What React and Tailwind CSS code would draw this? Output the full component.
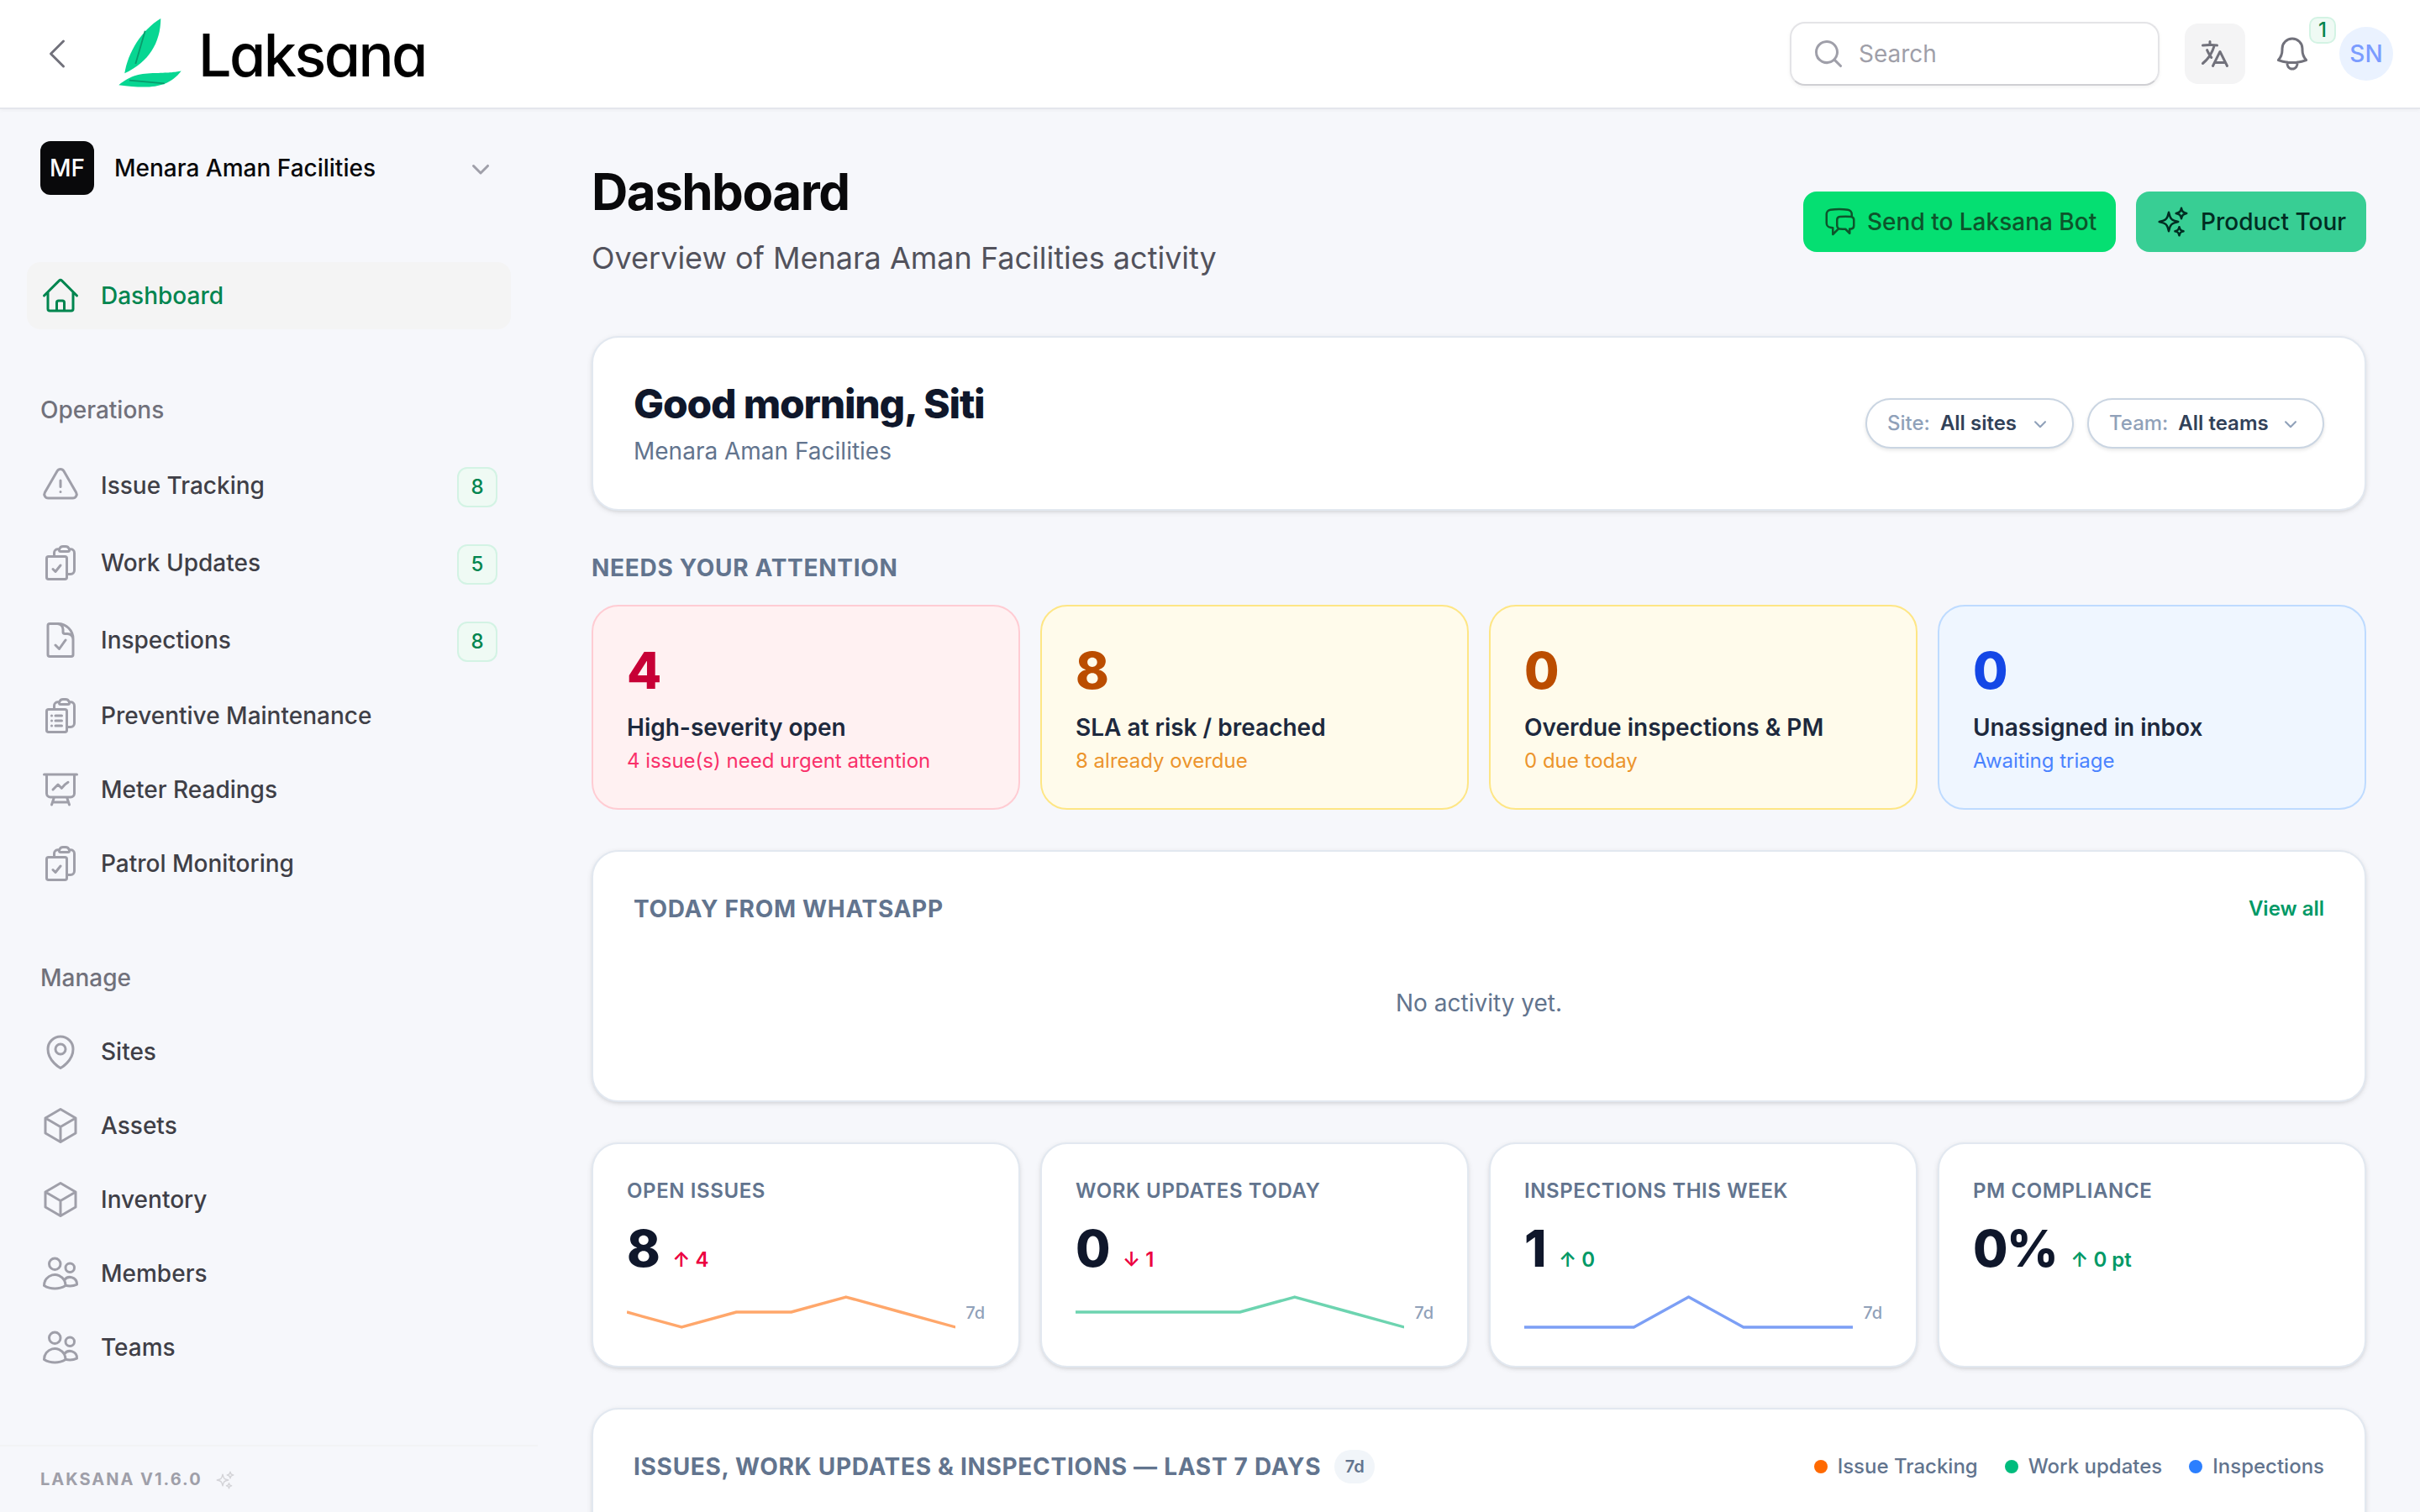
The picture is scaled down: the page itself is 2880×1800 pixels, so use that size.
import {
  HiOutlineBell,
  HiOutlineChatBubbleLeftRight,
  HiOutlineChevronLeft,
  HiOutlineClipboardDocumentCheck,
  HiOutlineClipboardDocumentList,
  HiOutlineCube,
  HiOutlineDocumentCheck,
  HiOutlineExclamationTriangle,
  HiOutlineHome,
  HiOutlineMapPin,
  HiOutlinePresentationChartLine,
  HiOutlineSparkles,
  HiOutlineUsers,
  HiMiniChevronDown,
  HiMiniLanguage,
  HiMiniMagnifyingGlass,
} from "react-icons/hi2";

const operations = [
  { label: "Issue Tracking", icon: HiOutlineExclamationTriangle, badge: 8 },
  { label: "Work Updates", icon: HiOutlineClipboardDocumentCheck, badge: 5 },
  { label: "Inspections", icon: HiOutlineDocumentCheck, badge: 8 },
  { label: "Preventive Maintenance", icon: HiOutlineClipboardDocumentList },
  { label: "Meter Readings", icon: HiOutlinePresentationChartLine },
  { label: "Patrol Monitoring", icon: HiOutlineClipboardDocumentCheck },
];

const manage = [
  { label: "Sites", icon: HiOutlineMapPin },
  { label: "Assets", icon: HiOutlineCube },
  { label: "Inventory", icon: HiOutlineCube },
  { label: "Members", icon: HiOutlineUsers },
  { label: "Teams", icon: HiOutlineUsers },
];

const attention = [
  {
    value: "4",
    label: "High-severity open",
    note: "4 issue(s) need urgent attention",
    box: "border-[#ffccd3] bg-[#fff1f2]",
    num: "text-[#c70036]",
    noteColor: "text-[#f9306a]",
  },
  {
    value: "8",
    label: "SLA at risk / breached",
    note: "8 already overdue",
    box: "border-[#fee685] bg-[#fffbeb]",
    num: "text-[#bb4d00]",
    noteColor: "text-[#ec942c]",
  },
  {
    value: "0",
    label: "Overdue inspections & PM",
    note: "0 due today",
    box: "border-[#fee685] bg-[#fffbeb]",
    num: "text-[#bb4d00]",
    noteColor: "text-[#ec942c]",
  },
  {
    value: "0",
    label: "Unassigned in inbox",
    note: "Awaiting triage",
    box: "border-[#bedbff] bg-[#eff6ff]",
    num: "text-[#1447e6]",
    noteColor: "text-[#4a83ff]",
  },
];

const stats = [
  { label: "Open issues", value: "8", delta: "↑ 4", deltaColor: "text-[#ec003f]", stroke: "#ffa76b", data: [1, 0, 1, 1, 2, 1, 0] },
  { label: "Work updates today", value: "0", delta: "↓ 1", deltaColor: "text-[#ec003f]", stroke: "#6dd4b0", data: [1, 1, 1, 1, 2, 1, 0] },
  { label: "Inspections this week", value: "1", delta: "↑ 0", deltaColor: "text-[#009966]", stroke: "#7c9ff5", data: [0, 0, 0, 2, 0, 0, 0] },
  { label: "PM compliance", value: "0%", delta: "↑ 0 pt", deltaColor: "text-[#009966]" },
];

const legend = [
  { label: "Issue Tracking", dot: "bg-[#ff6900]" },
  { label: "Work updates", dot: "bg-[#00bc7d]" },
  { label: "Inspections", dot: "bg-[#2b7fff]" },
];

const CARD = "rounded-[32px] border-2 border-slate-200 bg-white shadow-[0_2px_6px_rgba(0,0,0,0.1),0_2px_4px_-2px_rgba(0,0,0,0.1)]";

function Logo() {
  return (
    <div className="flex items-center">
      <svg width="76" height="84" viewBox="0 0 76 84" className="mt-[-2px]">
        <path d="M51.300 1C28 15 12 42 8.300 66.300C37 53 51 30 51.300 1Z" fill="#07d692" />
        <path d="M1.300 80.300C16 68 27 66.500 45 66S67 65 75.700 63.500C60 84 38 85 1.300 80.300Z" fill="#07d692" />
        <path d="M32.700 15.700 21.300 55M14 74.700l41.700 3.600" stroke="#089b6c" strokeWidth="1.800" fill="none" />
      </svg>
      <span className="mt-1 ml-[20px] text-[70px] leading-[84px] font-medium tracking-[-2.500px] text-black [font-feature-settings:'cv11']">
        Laksana
      </span>
    </div>
  );
}

function TopBar() {
  return (
    <header className="flex h-[130px] shrink-0 items-center border-b-2 border-[#e4e6ec] bg-white pr-8 pl-11 shadow-[0_2px_4px_rgba(0,0,0,0.03)]">
      <HiOutlineChevronLeft className="mr-12 size-12 text-zinc-500" />
      <Logo />
      <div className="ml-auto flex items-center">
        <div className="flex h-[76px] w-[440px] items-center gap-4 rounded-[18px] border-2 border-zinc-200 border-b-[#cfcfd3] bg-white pl-6 shadow-[0_2px_4px_rgba(0,0,0,0.05)]">
          <HiMiniMagnifyingGlass className="size-10 text-zinc-400" />
          <span className="text-[28px] text-zinc-400">Search</span>
        </div>
        <div className="ml-[30px] flex size-[72px] items-center justify-center rounded-2xl bg-[#f4f4f5]">
          <HiMiniLanguage className="size-10 text-zinc-500" />
        </div>
        <div className="relative ml-8 size-12">
          <HiOutlineBell className="size-12 text-zinc-500" />
          <span className="absolute -top-5 left-11 flex size-8 items-center justify-center rounded-[10px] border-2 border-[#d3f3e4] bg-[#effaf4] text-2xl font-medium text-[#00854f]">
            1
          </span>
        </div>
        <div className="ml-8 flex size-16 items-center justify-center rounded-full bg-[#eaf2ff] text-[28px] font-medium text-[#7b9cff]">SN</div>
      </div>
    </header>
  );
}

function NavItem({ label, icon: Icon, badge }) {
  return (
    <li className={badge ? "flex h-[84px] items-center px-4" : "flex h-20 items-center px-4"}>
      <Icon className="size-12 text-zinc-400" />
      <span className="ml-6 text-[28px] font-medium text-zinc-700">{label}</span>
      {badge && (
        <span className="mt-1 ml-auto flex size-12 items-center justify-center rounded-xl border-2 border-[#d3f3e4] bg-[#effaf4] text-2xl font-medium text-[#00854f]">
          {badge}
        </span>
      )}
    </li>
  );
}

function NavGroup({ title, items }) {
  return (
    <section>
      <h3 className="mt-[76px] mb-7 px-4 text-[28px] leading-10 font-medium text-zinc-500">{title}</h3>
      <ul className="flex flex-col gap-2">
        {items.map((it) => (
          <NavItem key={it.label} {...it} />
        ))}
      </ul>
    </section>
  );
}

function Sidebar() {
  return (
    <aside className="flex w-[640px] shrink-0 flex-col">
      <div className="flex-1 px-8">
        <div className="mt-[38px] flex h-16 items-center px-4">
          <div className="flex size-16 items-center justify-center rounded-xl bg-[#09090b] text-[28px] font-medium text-white">MF</div>
          <span className="ml-6 text-[28px] font-medium text-zinc-950">Menara Aman Facilities</span>
          <HiMiniChevronDown className="mr-0 ml-auto size-10 text-zinc-400" />
        </div>
        <div className="mt-20 flex h-20 items-center rounded-2xl bg-[#f4f4f4] px-4">
          <HiOutlineHome className="size-12 text-[#00854f]" />
          <span className="ml-6 text-[28px] font-medium text-[#00854f]">Dashboard</span>
        </div>
        <NavGroup title="Operations" items={operations} />
        <NavGroup title="Manage" items={manage} />
      </div>
      <div className="flex h-20 items-center gap-[15px] border-t-2 border-[#f2f3f5] px-12">
        <span className="text-xl font-bold tracking-[0.1em] text-zinc-400">LAKSANA V1.6.0</span>
        <HiOutlineSparkles className="mt-0.5 size-6 text-zinc-300" />
      </div>
    </aside>
  );
}

function Filter({ name, value, width }) {
  return (
    <div className={`flex h-[60px] items-center rounded-full border-2 border-[#cad5e2] bg-white px-6 text-2xl shadow-[0_2px_4px_rgba(0,0,0,0.1)] ${width}`}>
      <span className="font-medium text-slate-400">{name}:</span>
      <span className="ml-3 font-semibold text-slate-700">{value}</span>
      <HiMiniChevronDown className="ml-auto size-7 text-slate-400" />
    </div>
  );
}

function Sparkline({ data, stroke }) {
  const points = data.map((v, i) => `${(i * 392) / 6},${42 - v * 18}`).join(" ");
  return (
    <div className="mt-4 flex items-center gap-3">
      <svg width="392" height="48" viewBox="0 0 392 48">
        <polyline points={points} fill="none" stroke={stroke} strokeWidth="3.400" strokeLinejoin="round" />
      </svg>
      <span className="mt-0.5 text-xl font-medium text-slate-400">7d</span>
    </div>
  );
}

function Stat({ label, value, delta, deltaColor, data, stroke }) {
  return (
    <div className={`${CARD} h-[268px] px-10 pt-10`}>
      <div className="text-2xl leading-8 font-semibold tracking-[0.025em] text-slate-500 uppercase">{label}</div>
      <div className="mt-4 flex items-baseline gap-4">
        <span className="text-[60px] leading-[72px] font-extrabold tracking-[-0.025em] text-slate-900">{value}</span>
        <span className={`text-2xl font-semibold ${deltaColor}`}>{delta}</span>
      </div>
      {data && <Sparkline data={data} stroke={stroke} />}
    </div>
  );
}

const SECTION_TITLE = "text-[28px] leading-10 font-bold tracking-[0.025em] text-slate-500 uppercase";

function Main() {
  return (
    <main className="flex-1 px-16">
      <div className="mt-[58px] flex items-center justify-between">
        <div>
          <h1 className="text-[60px] leading-[80px] font-bold tracking-[-0.025em] text-zinc-950">Dashboard</h1>
          <p className="mt-[11px] mb-px text-[36px] leading-[56px] text-zinc-600">Overview of Menara Aman Facilities activity</p>
        </div>
        <div className="mt-1 flex gap-6 text-[28px] font-medium">
          <button className="flex h-[72px] w-[372px] items-center gap-3 rounded-2xl bg-[#05df72] pl-6 text-[#0d542b]">
            <HiOutlineChatBubbleLeftRight className="size-10" />
            Send to Laksana Bot
          </button>
          <button className="flex h-[72px] w-[274px] items-center gap-[13px] rounded-2xl bg-[#38ce94] pl-6 text-[#002c22]">
            <HiOutlineSparkles className="size-10" />
            Product Tour
          </button>
        </div>
      </div>

      <section className={`${CARD} mt-16 flex h-52 items-center justify-between px-12`}>
        <div>
          <h2 className="text-[48px] leading-[64px] font-extrabold tracking-[-0.025em] text-slate-900">Good morning, Siti</h2>
          <p className="mt-1 mb-0.5 text-[28px] leading-10 text-slate-500">Menara Aman Facilities</p>
        </div>
        <div className="flex gap-4">
          <Filter name="Site" value="All sites" width="w-[248px]" />
          <Filter name="Team" value="All teams" width="w-[282px]" />
        </div>
      </section>

      <h3 className={`${SECTION_TITLE} mt-12`}>Needs your attention</h3>
      <div className="mt-6 grid grid-cols-4 gap-6">
        {attention.map((a) => (
          <div key={a.label} className={`h-[244px] rounded-[32px] border-2 px-10 pt-10 ${a.box}`}>
            <div className={`text-[60px] leading-[72px] font-extrabold ${a.num}`}>{a.value}</div>
            <div className="mt-3 text-[28px] leading-10 font-semibold text-slate-800">{a.label}</div>
            <div className={`mt-1 text-2xl leading-8 ${a.noteColor}`}>{a.note}</div>
          </div>
        ))}
      </div>

      <section className={`${CARD} mt-12 h-[300px] px-12 pt-12`}>
        <div className="flex items-center justify-between">
          <h3 className={SECTION_TITLE}>Today from WhatsApp</h3>
          <span className="text-2xl font-semibold text-[#009966]">View all</span>
        </div>
        <p className="mt-6 py-12 text-center text-[28px] leading-10 text-slate-500">No activity yet.</p>
      </section>

      <div className="mt-12 grid grid-cols-4 gap-6">
        {stats.map((s) => (
          <Stat key={s.label} {...s} />
        ))}
      </div>

      <section className={`${CARD} mt-12 flex h-[600px] items-start justify-between px-12 pt-12`}>
        <div className="flex items-center gap-4">
          <h3 className={SECTION_TITLE}>Issues, work updates & inspections — last 7 days</h3>
          <span className="flex h-10 w-12 items-center justify-center rounded-full bg-slate-100 text-xl font-semibold text-slate-500">7d</span>
        </div>
        <div className="flex h-10 items-center gap-8">
          {legend.map((l) => (
            <span key={l.label} className="flex items-center gap-3 text-2xl font-medium text-slate-500">
              <span className={`size-4 rounded-full ${l.dot}`} />
              {l.label}
            </span>
          ))}
        </div>
      </section>
    </main>
  );
}

export default function App() {
  return (
    <div className="flex h-[1800px] w-[2880px] flex-col overflow-hidden bg-[#f6f7fb] font-['Inter',sans-serif] leading-[1.5]">
      <TopBar />
      <div className="flex min-h-0 flex-1">
        <Sidebar />
        <Main />
      </div>
    </div>
  );
}
